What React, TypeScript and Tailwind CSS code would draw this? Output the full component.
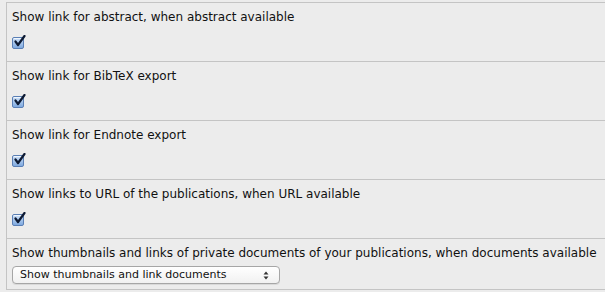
const rows = [
  "Show link for abstract, when abstract available",
  "Show link for BibTeX export",
  "Show link for Endnote export",
  "Show links to URL of the publications, when URL available",
];

function MacCheckbox() {
  return (
    <span className="relative block w-[12px] h-[12px] rounded-[2px] border border-[#5a7fb5] bg-gradient-to-b from-[#cfe2f8] to-[#7fa9df] shadow-[inset_0_1px_0_rgba(255,255,255,0.7)]">
      <svg
        className="absolute -top-[3px] left-[0px] w-[13px] h-[13px]"
        viewBox="0 0 13 13"
        fill="none"
      >
        <path
          d="M2.5 6.5 L5 10 L11.5 1"
          stroke="#0d1a33"
          strokeWidth={2.2}
          strokeLinecap="round"
          strokeLinejoin="round"
        />
      </svg>
    </span>
  );
}

export default function App() {
  return (
    <div className="w-[605px] h-[292px] bg-[#ececec] pt-[2px] font-['DejaVu_Sans',Verdana,sans-serif] text-[12px] text-[#111]">
      <div className="ml-[6px] border-l border-[#c4c4c4]">
        {rows.map((label, i) => (
          <div key={i} className="border-t border-[#c4c4c4] pl-[5px] pt-[6px] pb-[12px]">
            <div className="leading-[16px] whitespace-nowrap">{label}</div>
            <div className="mt-[12px]">
              <MacCheckbox />
            </div>
          </div>
        ))}
        <div className="border-t border-b border-[#c4c4c4] pl-[5px] pt-[6px] pb-[5px]">
          <div className="leading-[16px] whitespace-nowrap">
            Show thumbnails and links of private documents of your publications, when documents available
          </div>
          <div className="mt-[5px] w-[268px] h-[18px] rounded-[4px] border border-[#a6a6a6] bg-gradient-to-b from-white to-[#f1f1f1] shadow-[0_1px_0_rgba(0,0,0,0.08)] flex items-center justify-between pl-[7px] pr-[10px]">
            <span className="text-[11px] leading-[14px] text-[#111]">Show thumbnails and link documents</span>
            <svg className="w-[6px] h-[9px]" viewBox="0 0 6 9">
              <path d="M3 0.5 L5.5 3.5 H0.5 Z" fill="#333" />
              <path d="M3 8.5 L5.5 5.5 H0.5 Z" fill="#333" />
            </svg>
          </div>
        </div>
      </div>
    </div>
  );
}
